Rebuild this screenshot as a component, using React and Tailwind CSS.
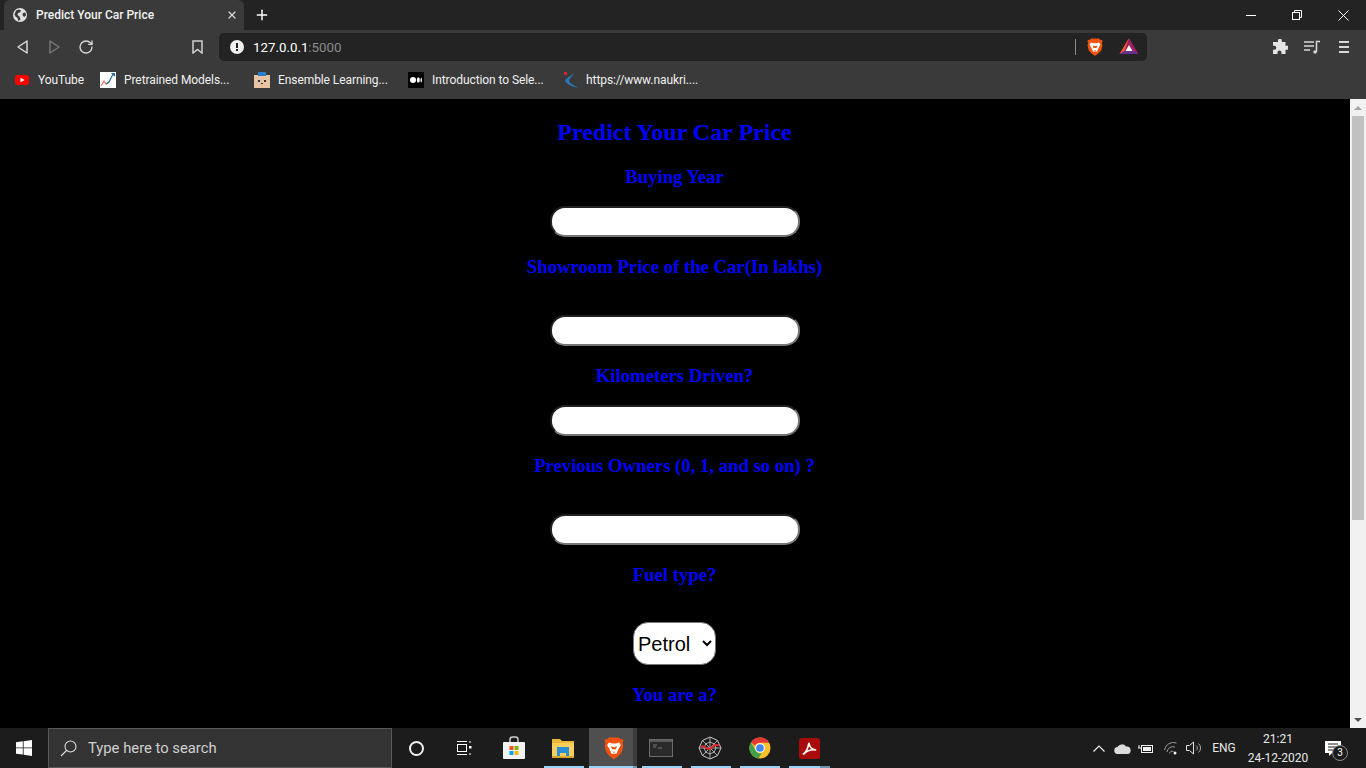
import React from 'react'
import { Plus, X, RotateCw } from 'lucide-react'

const BOOKMARKS = [
  { w: 'w-[85px]', gap: 'ml-[9px]', label: 'YouTube', icon: <YouTubeIcon /> },
  { w: 'w-[154px]', gap: 'ml-[8px]', label: 'Pretrained Models...', icon: <ChartIcon /> },
  { w: 'w-[154px]', gap: 'ml-[8px]', label: 'Ensemble Learning...', icon: <FaceIcon /> },
  { w: 'w-[155px]', gap: 'ml-[8px]', label: 'Introduction to Sele...', icon: <MediumIcon /> },
  { w: 'w-[150px]', gap: 'ml-[7px]', label: 'https://www.naukri....', icon: <NaukriIcon /> },
]

function YouTubeIcon() {
  return (
    <svg width="14" height="16" viewBox="0 0 14 16">
      <rect x="0" y="3" width="14" height="10" rx="2.5" fill="#f00" />
      <path d="M5.5 5.8v4.4L9.5 8z" fill="#fff" />
    </svg>
  )
}

function ChartIcon() {
  return (
    <svg width="16" height="16" viewBox="0 0 16 16">
      <rect width="16" height="16" fill="#fff" />
      <path d="M1 14l3-5 2 3 3-2" fill="none" stroke="#e8704f" strokeWidth="1.2" />
      <path d="M6 12l3-2 4-8" fill="none" stroke="#2a6f9e" strokeWidth="1.2" />
      <path d="M11 1h4v4z" fill="#2a6f9e" />
    </svg>
  )
}

function FaceIcon() {
  return (
    <svg width="16" height="16" viewBox="0 0 16 16">
      <rect y="3" width="16" height="13" fill="#e8c4a4" />
      <rect x="4" y="0" width="8" height="4" fill="#2b7fc4" />
      <rect x="4" y="8" width="2" height="2" fill="#333" />
      <rect x="10" y="8" width="2" height="2" fill="#333" />
      <rect x="7" y="11" width="2" height="1" fill="#333" />
    </svg>
  )
}

function MediumIcon() {
  return (
    <svg width="16" height="16" viewBox="0 0 16 16">
      <rect width="16" height="16" rx="1" fill="#000" />
      <circle cx="5" cy="8" r="3" fill="#fff" />
      <ellipse cx="10.3" cy="8" rx="1.5" ry="2.8" fill="#fff" />
      <ellipse cx="13.2" cy="8" rx="0.7" ry="2.5" fill="#fff" />
    </svg>
  )
}

function NaukriIcon() {
  return (
    <svg width="16" height="16" viewBox="0 0 16 16">
      <path d="M12 1C7 4 2 7 2 9c2 3 7 6 13 6.500C10 13 6.500 11 6 9c0-2 3-5 6-8z" fill="#2a78b8" />
      <rect x="1" y="0" width="3" height="3" fill="#d8232a" />
    </svg>
  )
}

function BraveIcon({ w = 16, h = 18 }) {
  return (
    <svg width={w} height={h} viewBox="0 0 16 18">
      <path d="M4 .5h8l1.500 1.500 1.500-.2.500 1.700-.7 2 .7 1.500-1 4.500c-.5 2-4.500 5-6.500 6.500-2-1.500-6-4.500-6.500-6.500l-1-4.500.7-1.500-.7-2 .5-1.700L2.500 2z" fill="#f1520f" />
      <path d="M4 4.500l2.500.8h3l2.500-.8 1.500 2-2 3.500-1.500 3.500h-4L4.500 10l-2-3.500z" fill="#fff" />
      <path d="M5.500 7.500l2.500.8 2.500-.8-1 2.500h-3zM7 12h2l-1 1z" fill="#f1520f" />
    </svg>
  )
}

function BatIcon() {
  return (
    <svg width="20" height="18" viewBox="0 0 20 18">
      <path d="M10 0l9.500 16H.5z" fill="#9e1f63" />
      <path d="M10 0L.5 16l5-3z" fill="#f15a24" />
      <path d="M.5 16h19l-4.500-3h-9z" fill="#662d91" />
      <path d="M10 7l3.500 6h-7z" fill="#fff" />
    </svg>
  )
}

function WindowsLogo() {
  return (
    <svg width="16" height="16" viewBox="0 0 16 16" fill="#fff">
      <path d="M0 2.300l6.800-1v6.200H0zM7.600 1.200L16 0v7.500H7.600zM0 8.300h6.800v6.300L0 13.700zM7.600 8.300H16V16l-8.400-1.200z" />
    </svg>
  )
}

function TaskView() {
  return (
    <svg width="18" height="16" viewBox="0 0 18 16" fill="none" stroke="#fff" strokeWidth="1">
      <path d="M1 1.500h10M1 14.500h10" />
      <rect x="1.500" y="4.500" width="9" height="7" />
      <path d="M14 1v2M14 13v2" />
      <rect x="13" y="6" width="2.500" height="2.500" fill="#fff" stroke="none" />
    </svg>
  )
}

function StoreIcon() {
  return (
    <svg width="24" height="24" viewBox="0 0 24 24">
      <path d="M8 7V3.500C8 2 9 1 10.500 1h3C15 1 16 2 16 3.500V7" fill="none" stroke="#ccc" strokeWidth="1.500" />
      <rect x="1" y="6" width="22" height="17" rx="1" fill="#f3f3f3" />
      <rect x="7.500" y="10" width="4" height="4" fill="#f25022" />
      <rect x="12.500" y="10" width="4" height="4" fill="#7fba00" />
      <rect x="7.500" y="15" width="4" height="4" fill="#00a4ef" />
      <rect x="12.500" y="15" width="4" height="4" fill="#ffb900" />
    </svg>
  )
}

function FolderIcon() {
  return (
    <svg width="22" height="20" viewBox="0 0 22 20">
      <path d="M0 1h8l2 2h12v17H0z" fill="#e8b739" />
      <rect x="0" y="5" width="22" height="15" fill="#f6cf5d" />
      <path d="M5 9h12v9h-3v-3H8v3H5z" fill="#2b8fd8" />
      <rect x="0" y="18" width="22" height="2" fill="#d9a62c" />
    </svg>
  )
}

function TerminalIcon() {
  return (
    <svg width="24" height="18" viewBox="0 0 24 18">
      <rect x=".5" y=".5" width="23" height="17" fill="#2a2a2a" stroke="#6d6d6d" />
      <rect x="1" y="1" width="22" height="2" fill="#5a5a5a" />
      <path d="M4 6h4M4 8h3M9 9h4" stroke="#777" strokeWidth="1" />
    </svg>
  )
}

function SpiderIcon() {
  return (
    <svg width="24" height="24" viewBox="0 0 24 24" fill="none">
      <path d="M12 1l7.500 3.500L23 12l-3.500 7.500L12 23l-7.500-3.500L1 12l3.500-7.500z" stroke="#ccc" strokeWidth="1" />
      <path d="M12 6l4.200 1.800L18 12l-1.800 4.200L12 18l-4.200-1.800L6 12l1.800-4.200zM12 1v22M1 12h22M4.500 4.500l15 15M19.500 4.500l-15 15" stroke="#ccc" strokeWidth=".8" />
      <path d="M3 11c3-3 5 3 8 2s4-4 7-4 2 0 3-1" stroke="#e0252c" strokeWidth="2" />
    </svg>
  )
}

function ChromeIcon() {
  return (
    <svg width="22" height="22" viewBox="0 0 24 24">
      <circle cx="12" cy="12" r="11.500" fill="#fbc02d" />
      <path d="M12 .5a11.500 11.500 0 0 1 10 5.700H12a6 6 0 0 0-5.500 3.300L2.200 5.600A11.500 11.500 0 0 1 12 .5z" fill="#e53935" />
      <path d="M2.200 5.600l5 8.900a6 6 0 0 0 6.500 3.200l-3.300 5.700A11.500 11.500 0 0 1 2.200 5.600z" fill="#43a047" />
      <circle cx="12" cy="12" r="5.300" fill="#fff" />
      <circle cx="12" cy="12" r="4.200" fill="#4285f4" />
    </svg>
  )
}

function AcrobatIcon() {
  return (
    <svg width="21" height="21" viewBox="0 0 22 22">
      <rect width="22" height="22" rx="3" fill="#a90a0a" />
      <path d="M4 17c3-1 5-5 6.500-12M10.500 5c0 4 3 7 7.500 7.500-4-.5-9 0-13 4.500" fill="none" stroke="#fff" strokeWidth="1.700" />
    </svg>
  )
}

function Label({ children, className = '' }) {
  return <h3 className={`text-[18.72px] font-bold leading-[22px] text-[#0000ff] text-center ${className}`}>{children}</h3>
}

function Field({ className = '' }) {
  return (
    <input
      type="text"
      className={`block w-[250px] h-[31px] rounded-[15px] bg-white border-2 [border-style:inset] border-[#767676] ${className}`}
    />
  )
}

const UNDERLINES = [
  { key: 'store', cls: 'w-[40px] ml-[544px] bg-[#99d1f7]' },
  { key: 'brave', cls: 'w-[44px] ml-[5px] bg-[#99d1f7]' },
  { key: 'brave2', cls: 'w-[4px] bg-[#6d93ad]' },
  { key: 'term', cls: 'w-[40px] ml-[5px] bg-[#99d1f7]' },
  { key: 'spider', cls: 'w-[40px] ml-[9px] bg-[#99d1f7]' },
  { key: 'chrome', cls: 'w-[40px] ml-[9px] bg-[#99d1f7]' },
  { key: 'pdf', cls: 'w-[31px] ml-[9px] bg-[#99d1f7]' },
  { key: 'pdf2', cls: 'w-[10px] bg-[#6d93ad]' },
]

export default function App() {
  return (
    <div className="h-[768px] w-[1366px] overflow-hidden flex flex-col bg-black font-['Roboto',sans-serif]">
      {/* Tab strip */}
      <div className="h-[30px] shrink-0 bg-[#232323] flex items-stretch pl-[4px]">
        <div className="w-[240px] bg-[#3a3a3a] rounded-t-[6px] flex items-center pl-[9px] pr-[6px] text-white">
          <svg width="14" height="14" viewBox="0 0 14 14">
            <circle cx="7" cy="7" r="7" fill="#e0e0e0" />
            <path d="M3 2.500l3-1 2 1-1 2-2 .5-.5 2 2 1.500 1 3-2 1.500-1-3-2-1.500-1-2zM10 5l2.500-.5.5 3-2 1.500-1.500-2z" fill="#3a3a3a" />
          </svg>
          <span className="ml-[9px] text-[12px] font-medium text-[#f0f0f0] flex-1 leading-none">Predict Your Car Price</span>
          <X size={12} strokeWidth={2.5} className="text-[#d8d8d8]" />
        </div>
        <div className="w-[36px] flex items-center justify-center">
          <Plus size={16} strokeWidth={2.2} className="text-white" />
        </div>
        <div className="flex-1" />
        <div className="w-[46px] flex items-center justify-center">
          <div className="w-[10px] h-px bg-white" />
        </div>
        <div className="w-[46px] flex items-center justify-center">
          <svg width="10" height="10" viewBox="0 0 10 10" fill="none" stroke="#fff">
            <rect x=".5" y="2.500" width="7" height="7" />
            <path d="M2.500 2.500v-2h7v7h-2" />
          </svg>
        </div>
        <div className="w-[46px] flex items-center justify-center">
          <svg width="11" height="11" viewBox="0 0 11 11" stroke="#fff">
            <path d="M.5.500l10 10M10.500.500l-10 10" />
          </svg>
        </div>
      </div>

      {/* Toolbar */}
      <div className="h-[34px] shrink-0 bg-[#3a3a3a] flex items-center">
        <div className="w-[44px] shrink-0 flex justify-center">
          <svg width="11" height="14" viewBox="0 0 11 14" fill="none" stroke="#d8d8d8" strokeWidth="1.500">
            <path d="M10 1v12L1 7z" strokeLinejoin="round" />
          </svg>
        </div>
        <div className="w-[20px] shrink-0 flex justify-center">
          <svg width="11" height="14" viewBox="0 0 11 14" fill="none" stroke="#777" strokeWidth="1.500">
            <path d="M1 1v12l9-6z" strokeLinejoin="round" />
          </svg>
        </div>
        <div className="w-[44px] shrink-0 flex justify-center">
          <RotateCw size={16} strokeWidth={2} className="text-[#d8d8d8]" />
        </div>
        <div className="w-[82px] shrink-0" />
        <div className="w-[14px] shrink-0 flex justify-center">
          <svg width="11" height="14" viewBox="0 0 11 14" fill="none" stroke="#d0d0d0" strokeWidth="1.500">
            <path d="M1 1h9v12L5.500 9.500 1 13z" />
          </svg>
        </div>
        <div className="w-[15px] shrink-0" />
        <div className="w-[928px] shrink-0 h-[28px] rounded-[5px] bg-[#232323] flex items-center pl-[11px] pr-[8px]">
          <svg width="14" height="14" viewBox="0 0 14 14">
            <circle cx="7" cy="7" r="7" fill="#f0f0f0" />
            <rect x="6" y="3" width="2" height="5" fill="#232323" />
            <rect x="6" y="9" width="2" height="2" fill="#232323" />
          </svg>
          <span className="ml-[9px] mt-px text-[13.3px] leading-none text-white">127.0.0.1<span className="text-[#8b8b8b]">:5000</span></span>
          <div className="flex-1" />
          <div className="w-px h-[16px] bg-[#8a8a8a]" />
          <div className="ml-[11px] flex"><BraveIcon /></div>
          <div className="ml-[16px] flex"><BatIcon /></div>
        </div>
        <div className="ml-[125px] flex items-center gap-[16px]">
          <svg width="16" height="16" viewBox="0 0 16 16" fill="#e4e4e4">
            <path d="M6 1a2 2 0 0 1 3.800 0V3h3.700v3.700H15a2 2 0 0 1 0 4h-1.500V15H9.500v-1.500a2 2 0 0 0-4 0V15H1v-4.300h1.300a2 2 0 0 0 0-4H1V3h5z" />
          </svg>
          <svg width="16" height="14" viewBox="0 0 16 14" fill="none" stroke="#d8d8d8" strokeWidth="1.500">
            <path d="M0 2h10M0 6h10M0 10h6M12.500 12V1.500H16" />
            <circle cx="11" cy="12" r="1.700" fill="#d8d8d8" stroke="none" />
          </svg>
          <svg width="10" height="12" viewBox="0 0 10 12" stroke="#d8d8d8" strokeWidth="2" className="ml-[3px]">
            <path d="M0 1h10M0 6h10M0 11h10" />
          </svg>
        </div>
      </div>

      {/* Bookmarks */}
      <div className="h-[35px] shrink-0 bg-[#3a3a3a] flex items-center pl-[15px] pb-[3px] text-[12px] tracking-[-0.08px] text-[#f0f0f0]">
        {BOOKMARKS.map(b => (
          <div key={b.label} className={`${b.w} flex items-center shrink-0`}>
            <span className="shrink-0 flex">{b.icon}</span>
            <span className={`${b.gap} leading-none whitespace-nowrap`}>{b.label}</span>
          </div>
        ))}
      </div>

      {/* Page */}
      <div className="flex-1 min-h-0 flex bg-black overflow-hidden">
        <main className="flex-1 min-w-0 pr-px flex flex-col items-center font-['Liberation_Serif',serif]">
          <h1 className="mt-[19px] text-[24px] font-bold leading-[28px] text-[#0000ff]">Predict Your Car Price</h1>
          <Label className="mt-[20px]">Buying Year</Label>
          <Field className="mt-[18px]" />
          <Label className="mt-[19px]">Showroom Price of the Car(In lakhs)</Label>
          <Field className="mt-[37px]" />
          <Label className="mt-[19px]">Kilometers Driven?</Label>
          <Field className="mt-[18px]" />
          <Label className="mt-[19px]">Previous Owners (0, 1, and so on) ?</Label>
          <Field className="mt-[37px]" />
          <Label className="mt-[19px]">Fuel type?</Label>
          <select className="mt-[36px] w-[83px] h-[43px] rounded-[15px] bg-white text-black text-[20px] border border-[#767676] font-['Liberation_Sans',sans-serif]">
            <option>Petrol</option>
            <option>Diesel</option>
          </select>
          <Label className="mt-[19px]">You are a?</Label>
        </main>
        <div className="w-[16px] shrink-0 bg-[#f1f1f1] flex flex-col items-center">
          <div className="h-[17px] flex items-center justify-center">
            <div className="w-0 h-0 border-x-[4px] border-x-transparent border-b-[4px] border-b-[#a3a3a3]" />
          </div>
          <div className="w-[12px] h-[404px] bg-[#c1c1c1]" />
          <div className="flex-1" />
          <div className="h-[17px] flex items-center justify-center">
            <div className="w-0 h-0 border-x-[4px] border-x-transparent border-t-[4px] border-t-[#505050]" />
          </div>
        </div>
      </div>

      {/* Taskbar */}
      <div className="relative h-[40px] shrink-0 bg-[#1c1c1c] flex items-center text-white">
        <div className="w-[48px] shrink-0 flex justify-center"><WindowsLogo /></div>
        <div className="w-[344px] shrink-0 h-[40px] bg-[#333333] border border-[#5a5a5a] flex items-center pl-[11px]">
          <svg width="17" height="17" viewBox="0 0 17 17" fill="none" stroke="#e0e0e0" strokeWidth="1.100">
            <circle cx="10.500" cy="6.500" r="5.500" />
            <path d="M6.500 10.500L1 16" />
          </svg>
          <span className="ml-[11px] text-[14.8px] leading-none text-[#d0d0d0]">Type here to search</span>
        </div>
        <div className="w-[49px] shrink-0 flex justify-center">
          <div className="w-[15px] h-[15px] rounded-full border-2 border-[#f0f0f0]" />
        </div>
        <div className="w-[47px] shrink-0 flex justify-center"><TaskView /></div>
        <div className="w-[52px] shrink-0 flex justify-center"><StoreIcon /></div>
        <div className="w-[46px] shrink-0 flex justify-center"><FolderIcon /></div>
        <div className="w-[44px] shrink-0 h-[40px] ml-[3px] bg-[#4f4f4f] flex items-center pl-[15px]"><BraveIcon w={20} h={24} /></div>
        <div className="w-[4px] shrink-0 h-[40px] bg-[#3d3d3d]" />
        <div className="w-[48px] shrink-0 flex justify-center"><TerminalIcon /></div>
        <div className="w-[49px] shrink-0 flex justify-center"><SpiderIcon /></div>
        <div className="w-[51px] shrink-0 flex justify-center"><ChromeIcon /></div>
        <div className="w-[48px] shrink-0 flex justify-center"><AcrobatIcon /></div>
        <div className="flex-1" />
        {/* Tray */}
        <div className="flex items-center text-[#e8e8e8]">
          <svg width="12" height="7" viewBox="0 0 12 7" fill="none" stroke="#f0f0f0" strokeWidth="1.200"><path d="M.5 6.500L6 1l5.500 5.500" /></svg>
          <svg className="ml-[9px]" width="17" height="11" viewBox="0 0 17 11" fill="#dcdcdc"><path d="M4 11a3.500 3.500 0 0 1-.5-7A5 5 0 0 1 12 3.500 3.800 3.800 0 0 1 13.500 11z" /></svg>
          <svg className="ml-[7px]" width="16" height="11" viewBox="0 0 16 11" fill="none" stroke="#f0f0f0"><rect x="3.500" y="2.500" width="11" height="7" /><rect x="5" y="4" width="8" height="4" fill="#f0f0f0" stroke="none" /><path d="M0 5h3M1 2v3" /></svg>
          <svg className="ml-[10px]" width="14" height="13" viewBox="0 0 14 13" fill="none" stroke="#9a9a9a"><path d="M.5 8a9 9 0 0 1 12-7M3 10a6 6 0 0 1 8-5M5.500 11.500a3 3 0 0 1 4-2" /><circle cx="11" cy="11" r="1.500" fill="#f0f0f0" stroke="none" /></svg>
          <svg className="ml-[8px]" width="16" height="14" viewBox="0 0 16 14" fill="none" stroke="#e0e0e0"><path d="M.5 4.500h3l4-3.500v12l-4-3.500h-3z" /><path d="M10 4.500a3 3 0 0 1 0 5M12.500 2.500a6 6 0 0 1 0 9" stroke="#aaa" /></svg>
          <span className="ml-[10px] w-[24px] text-[12px] leading-none text-center">ENG</span>
          <div className="ml-[13px] w-[58px] pt-[2px] flex flex-col items-center text-[12px] leading-[19px] whitespace-nowrap">
            <span>21:21</span>
            <span>24-12-2020</span>
          </div>
          <div className="relative ml-[18px] mr-[25px] w-[16px] h-[14px]">
            <svg width="16" height="15" viewBox="0 0 16 15" fill="#fff">
              <path d="M0 0h16v12H7l-3 3v-3H0z" />
              <path d="M3 3h10M3 6h10M3 9h7" stroke="#1c1c1c" />
            </svg>
            <span className="absolute left-[7px] top-[4px] w-[16px] h-[16px] rounded-full bg-[#1c1c1c] border border-[#8a8a8a] flex items-center justify-center text-[10px] leading-none text-white">3</span>
          </div>
        </div>
        {/* Running-app underlines */}
        <div className="absolute left-0 bottom-0 flex h-[2px]">
          {UNDERLINES.map(u => (
            <div key={u.key} className={u.cls} />
          ))}
        </div>
      </div>
    </div>
  )
}
